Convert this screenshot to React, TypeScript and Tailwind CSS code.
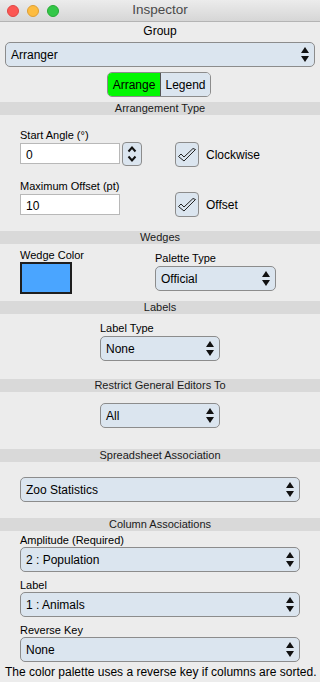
import React from "react";

const font = { fontFamily: '"Liberation Sans", Arial, sans-serif' };

function Arrows() {
  return (
    <svg width="8" height="15" viewBox="0 0 8 15" className="shrink-0">
      <polygon points="0,6 4,0 8,6" fill="#111" />
      <polygon points="0,9 8,9 4,15" fill="#111" />
    </svg>
  );
}

function Select({ text, className }: { text: string; className: string }) {
  return (
    <div
      className={`flex items-center justify-between rounded-[5px] border border-[#8c8c8c] bg-[#dbe5ef] pl-[5px] pr-[5px] text-[12px] text-black ${className}`}
    >
      <span>{text}</span>
      <Arrows />
    </div>
  );
}

function Header({ text }: { text: string }) {
  return (
    <div className="flex h-[13px] items-center justify-center bg-[#d9d9d9] text-[11px] leading-[13px] text-[#1a1a1a]">
      {text}
    </div>
  );
}

function Check() {
  return (
    <div className="flex h-[25px] w-[24px] items-center justify-center rounded-[4px] border border-[#8c8c8c] bg-[#dbe5ef]">
      <svg width="20" height="18" viewBox="0 0 20 18">
        <path
          d="M1.5 10.5 L4 8 L7 11 L16 2.5 L18.5 3.5 L7 15 Z"
          fill="none"
          stroke="#222"
          strokeWidth="1"
          strokeLinejoin="round"
        />
      </svg>
    </div>
  );
}

function Label({ text, className = "" }: { text: string; className?: string }) {
  return <div className={`h-[14px] whitespace-nowrap text-[11px] leading-[14px] text-black ${className}`}>{text}</div>;
}

export default function App() {
  return (
    <div className="h-[682px] w-[320px] overflow-hidden bg-[#ececec]" style={font}>
      {/* Title bar */}
      <div className="relative flex h-[22px] items-center justify-center border-b border-[#b4b4b4] bg-gradient-to-b from-[#ececec] to-[#d6d6d6]">
        <div className="absolute left-[7px] top-[5px] flex gap-[8px]">
          <div className="h-[12px] w-[12px] rounded-full bg-[#fc5753] border border-[#df4744]" />
          <div className="h-[12px] w-[12px] rounded-full bg-[#fdbc40] border border-[#de9f34]" />
          <div className="h-[12px] w-[12px] rounded-full bg-[#33c748] border border-[#27aa35]" />
        </div>
        <span className="text-[13.5px] text-[#4a4a4a]">Inspector</span>
      </div>

      {/* Group */}
      <div className="flex h-[17px] items-center justify-center text-[12px] text-black">Group</div>
      <div className="px-[5px] pt-[3px]">
        <Select text="Arranger" className="h-[25px]" />
      </div>
      <div className="mt-[5px] flex justify-center">
        <div className="ml-[-2px] flex h-[25px] overflow-hidden rounded-[5px] border border-[#8c8c8c] text-[12px] text-black">
          <div className="flex w-[53px] items-center justify-center border-r border-[#555] bg-[#00f700]">Arrange</div>
          <div className="flex w-[49px] items-center justify-center bg-[#dbe5ef]">Legend</div>
        </div>
      </div>

      <div className="mt-[5px]">
        <Header text="Arrangement Type" />
      </div>
      <div className="flex h-[116px] pl-[20px] pt-[13px]">
        <div className="flex w-[100px] flex-col">
          <Label text="Start Angle (°)" />
          <div className="mt-[1px] flex h-[21px] items-center border border-[#b8b8b8] bg-white pl-[5px] pt-[2px] text-[12px]">0</div>
          <Label text="Maximum Offset (pt)" className="mt-[15px]" />
          <div className="mt-[1px] flex h-[21px] items-center border border-[#b8b8b8] bg-white pl-[5px] pt-[2px] text-[12px]">10</div>
        </div>
        <div className="ml-[2px] mt-[14px] flex h-[24px] w-[20px] items-center justify-center rounded-[4px] border border-[#8c8c8c] bg-[#dbe5ef]">
          <svg width="10" height="18" viewBox="0 0 10 18">
            <path d="M1.5 6.5 L5 2.5 L8.5 6.5" fill="none" stroke="#111" strokeWidth="2" />
            <path d="M1.5 11.5 L5 15.5 L8.5 11.5" fill="none" stroke="#111" strokeWidth="2" />
          </svg>
        </div>
        <div className="ml-[33px] mt-[14px] flex flex-col">
          <div className="flex items-center">
            <Check />
            <span className="ml-[7px] text-[12px] text-black">Clockwise</span>
          </div>
          <div className="mt-[25px] flex items-center">
            <Check />
            <span className="ml-[7px] text-[12px] text-black">Offset</span>
          </div>
        </div>
      </div>

      <Header text="Wedges" />
      <div className="flex h-[57px] pl-[20px]">
        <div className="flex w-[135px] flex-col pt-[4px]">
          <Label text="Wedge Color" />
          <div className="h-[32px] w-[52px] border-2 border-[#1e1e1e] bg-[#4aa5ff]" />
        </div>
        <div className="flex flex-col pt-[7px]">
          <Label text="Palette Type" />
          <Select text="Official" className="mt-[1px] h-[25px] w-[121px]" />
        </div>
      </div>

      <Header text="Labels" />
      <div className="flex h-[65px] flex-col pl-[100px] pt-[7px]">
        <Label text="Label Type" />
        <Select text="None" className="mt-[1px] h-[25px] w-[120px]" />
      </div>

      <Header text="Restrict General Editors To" />
      <div className="flex h-[57px] flex-col pl-[100px] pt-[11px]">
        <Select text="All" className="h-[25px] w-[120px]" />
      </div>

      <Header text="Spreadsheet Association" />
      <div className="flex h-[56px] flex-col px-[20px] pt-[15px]">
        <Select text="Zoo Statistics" className="h-[25px]" />
      </div>

      <Header text="Column Associations" />
      <div className="flex flex-col px-[20px] pt-[2px]">
        <Label text="Amplitude (Required)" />
        <Select text="2 : Population" className="h-[25px]" />
        <Label text="Label" className="mt-[6px]" />
        <Select text="1 : Animals" className="h-[25px]" />
        <Label text="Reverse Key" className="mt-[6px]" />
        <Select text="None" className="h-[25px]" />
      </div>
      <div className="mt-[3px] h-[14px] whitespace-nowrap pl-[5px] text-[12px] leading-[14px] text-black">
        The color palette uses a reverse key if columns are sorted.
      </div>
    </div>
  );
}
